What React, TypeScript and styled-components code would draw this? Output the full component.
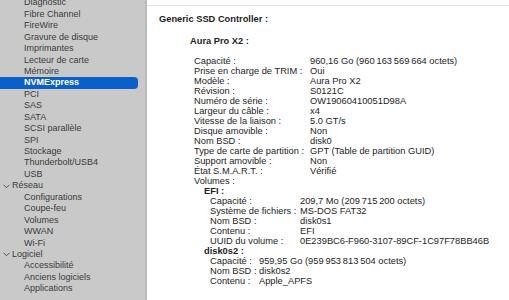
import styled, { createGlobalStyle } from "styled-components";

const GlobalStyle = createGlobalStyle`
  html, body {
    margin: 0;
    padding: 0;
    background: #ffffff;
  }
  body {
    font-family: "Liberation Sans", Arial, sans-serif;
    -webkit-font-smoothing: antialiased;
  }
`;

type SideItem = { label: string; parent?: boolean; selected?: boolean };

const sideItems: SideItem[] = [
  { label: "Diagnostic" },
  { label: "Fibre Channel" },
  { label: "FireWire" },
  { label: "Gravure de disque" },
  { label: "Imprimantes" },
  { label: "Lecteur de carte" },
  { label: "Mémoire" },
  { label: "NVMExpress", selected: true },
  { label: "PCI" },
  { label: "SAS" },
  { label: "SATA" },
  { label: "SCSI parallèle" },
  { label: "SPI" },
  { label: "Stockage" },
  { label: "Thunderbolt/USB4" },
  { label: "USB" },
  { label: "Réseau", parent: true },
  { label: "Configurations" },
  { label: "Coupe-feu" },
  { label: "Volumes" },
  { label: "WWAN" },
  { label: "Wi-Fi" },
  { label: "Logiciel", parent: true },
  { label: "Accessibilité" },
  { label: "Anciens logiciels" },
  { label: "Applications" },
];

type Prop = [string, string];

const deviceProps: Prop[] = [
  ["Capacité :", "960,16 Go (960\u202f163\u202f569\u202f664 octets)"],
  ["Prise en charge de TRIM :", "Oui"],
  ["Modèle :", "Aura Pro X2"],
  ["Révision :", "S0121C"],
  ["Numéro de série :", "OW19060410051D98A"],
  ["Largeur du câble :", "x4"],
  ["Vitesse de la liaison :", "5.0 GT/s"],
  ["Disque amovible :", "Non"],
  ["Nom BSD :", "disk0"],
  ["Type de carte de partition :", "GPT (Table de partition GUID)"],
  ["Support amovible :", "Non"],
  ["État S.M.A.R.T. :", "Vérifié"],
];

const efiProps: Prop[] = [
  ["Capacité :", "209,7 Mo (209\u202f715\u202f200 octets)"],
  ["Système de fichiers :", "MS-DOS FAT32"],
  ["Nom BSD :", "disk0s1"],
  ["Contenu :", "EFI"],
  ["UUID du volume :", "0E239BC6-F960-3107-89CF-1C97F78BB46B"],
];

const diskProps: Prop[] = [
  ["Capacité :", "959,95 Go (959\u202f953\u202f813\u202f504 octets)"],
  ["Nom BSD :", "disk0s2"],
  ["Contenu :", "Apple_APFS"],
];

function Chevron() {
  return (
    <svg width="7" height="5" viewBox="0 0 7 5">
      <path d="M0.8 1 L3.5 3.8 L6.2 1" fill="none" stroke="#5a5a5a" strokeWidth="1" strokeLinecap="round" />
    </svg>
  );
}

function PropTable({ rows, keyWidth }: { rows: Prop[]; keyWidth: number }) {
  return (
    <Table $keyWidth={keyWidth}>
      {rows.map(([k, v]) => (
        <Row key={k}>
          <Key>{k}</Key>
          <Value>{v}</Value>
        </Row>
      ))}
    </Table>
  );
}

export default function App() {
  return (
    <>
      <GlobalStyle />
      <Window>
        <Sidebar>
          <SideList>
            {sideItems.map((item) => (
              <SideRow key={item.label} $parent={item.parent} $selected={item.selected}>
                {item.parent && <Chevron />}
                <span>{item.label}</span>
              </SideRow>
            ))}
          </SideList>
        </Sidebar>
        <Content>
          <TopRule />
          <Heading>Generic SSD Controller :</Heading>
          <Device>
            <DeviceTitle>Aura Pro X2 :</DeviceTitle>
            <Props>
              <PropTable rows={deviceProps} keyWidth={116} />
              <Line>Volumes :</Line>
              <Volume>
                <VolumeTitle>EFI :</VolumeTitle>
                <VolumeBody>
                  <PropTable rows={efiProps} keyWidth={90} />
                </VolumeBody>
              </Volume>
              <Volume>
                <VolumeTitle>disk0s2 :</VolumeTitle>
                <VolumeBody>
                  <PropTable rows={diskProps} keyWidth={49} />
                </VolumeBody>
              </Volume>
            </Props>
          </Device>
        </Content>
      </Window>
    </>
  );
}

const Window = styled.div`
  display: flex;
  width: 509px;
  height: 300px;
  overflow: hidden;
  background: #ffffff;
`;

const Sidebar = styled.nav`
  flex: 0 0 145px;
  background: #c9c9c9;
  border-right: 2px solid #b9b9b9;
  overflow: hidden;
`;

const SideList = styled.div`
  display: flex;
  flex-direction: column;
  margin-top: -2.7px;
`;

const SideRow = styled.div<{ $parent?: boolean; $selected?: boolean }>`
  display: flex;
  align-items: center;
  gap: 2px;
  height: 11.44px;
  font-size: 9px;
  line-height: 11.44px;
  white-space: nowrap;
  margin: 0 7px 0 -4px;
  padding-left: ${(p) => (p.$parent ? "7px" : "28px")};
  border-radius: 4px;
  color: ${(p) => (p.$selected ? "#ffffff" : "#3b3b3b")};
  background: ${(p) => (p.$selected ? "#0b5fcb" : "transparent")};
  font-weight: ${(p) => (p.$selected ? 600 : 400)};

  svg {
    flex: none;
  }
`;

const Content = styled.main`
  flex: 1;
  display: flex;
  flex-direction: column;
  padding: 0 0 0 12px;
  color: #1d1d1d;
  font-size: 9.3px;
  line-height: 10px;
  overflow: hidden;
`;

const TopRule = styled.div`
  height: 5px;
  margin-left: -12px;
  border-bottom: 1px solid #e3e3e3;
`;

const Heading = styled.h1`
  margin: 8px 0 12px;
  font-size: 9.3px;
  line-height: 10px;
  font-weight: 700;
`;

const Device = styled.section`
  display: flex;
  flex-direction: column;
  padding-left: 31px;
`;

const DeviceTitle = styled.h2`
  margin: 0 0 10px;
  font-size: 9.3px;
  line-height: 10px;
  font-weight: 700;
`;

const Props = styled.div`
  display: flex;
  flex-direction: column;
  padding-left: 4px;
`;

const Table = styled.div<{ $keyWidth: number }>`
  display: grid;
  grid-template-columns: ${(p) => p.$keyWidth}px 1fr;
`;

const Row = styled.div`
  display: contents;
`;

const Key = styled.span`
  white-space: nowrap;
  height: 10px;
`;

const Value = styled.span`
  white-space: nowrap;
  height: 10px;
`;

const Line = styled.div`
  height: 10px;
`;

const Volume = styled.div`
  display: flex;
  flex-direction: column;
  padding-left: 10px;
`;

const VolumeTitle = styled.div`
  font-weight: 700;
  height: 10px;
`;

const VolumeBody = styled.div`
  padding-left: 6px;
`;
